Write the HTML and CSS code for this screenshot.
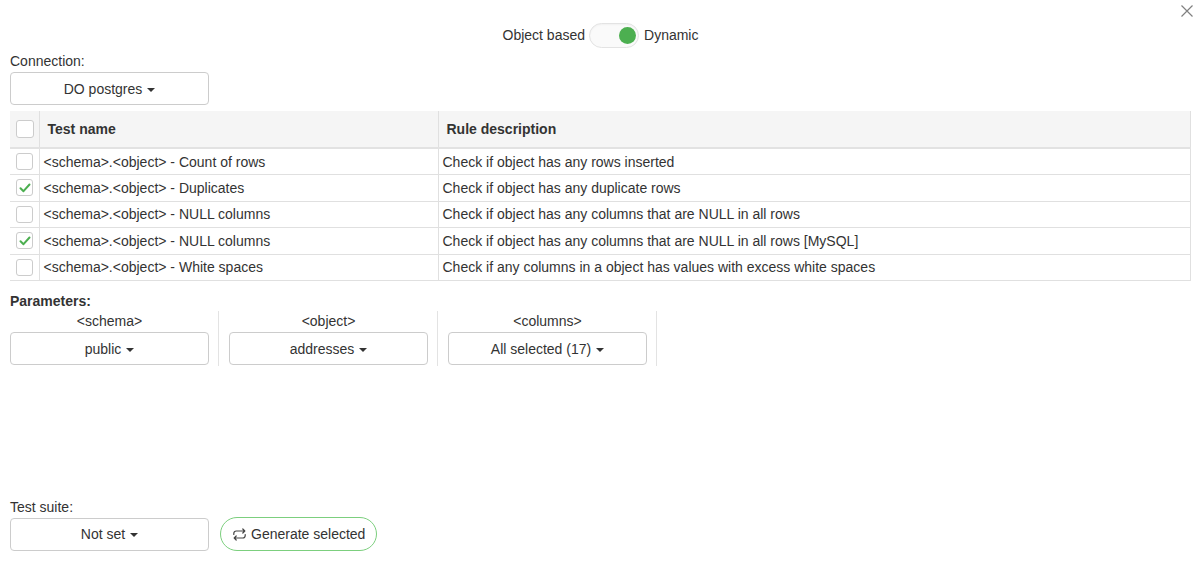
FILE: index.html
```html
<!DOCTYPE html>
<html>
<head>
<meta charset="utf-8">
<link rel="stylesheet" href="styles.css">
</head>
<body>
<div class="dialog">
  <button class="close" aria-label="Close">
    <svg width="12" height="12" viewBox="0 0 12 12"><path d="M0.5 0.5L11.5 11.5M11.5 0.5L0.5 11.5" stroke="#808080" stroke-width="1.2" fill="none"/></svg>
  </button>

  <div class="mode-row">
    <span>Object based</span>
    <span class="switch"><span class="knob"></span></span>
    <span>Dynamic</span>
  </div>

  <div class="label conn-label">Connection:</div>
  <button class="dropdown">DO postgres <span class="caret"></span></button>

  <table class="tests">
    <thead>
      <tr>
        <th class="cb-col"><span class="cb head"></span></th>
        <th class="name-col">Test name</th>
        <th>Rule description</th>
      </tr>
    </thead>
    <tbody>
      <tr>
        <td class="cb-col"><span class="cb"></span></td>
        <td>&lt;schema&gt;.&lt;object&gt; - Count of rows</td>
        <td>Check if object has any rows inserted</td>
      </tr>
      <tr>
        <td class="cb-col"><span class="cb checked"><svg width="12" height="10" viewBox="0 0 12 10"><path d="M1.5 5.2L4.5 8.2L10.5 1.5" stroke="#4caf50" stroke-width="2" fill="none" stroke-linecap="round" stroke-linejoin="round"/></svg></span></td>
        <td>&lt;schema&gt;.&lt;object&gt; - Duplicates</td>
        <td>Check if object has any duplicate rows</td>
      </tr>
      <tr>
        <td class="cb-col"><span class="cb"></span></td>
        <td>&lt;schema&gt;.&lt;object&gt; - NULL columns</td>
        <td>Check if object has any columns that are NULL in all rows</td>
      </tr>
      <tr>
        <td class="cb-col"><span class="cb checked"><svg width="12" height="10" viewBox="0 0 12 10"><path d="M1.5 5.2L4.5 8.2L10.5 1.5" stroke="#4caf50" stroke-width="2" fill="none" stroke-linecap="round" stroke-linejoin="round"/></svg></span></td>
        <td>&lt;schema&gt;.&lt;object&gt; - NULL columns</td>
        <td>Check if object has any columns that are NULL in all rows [MySQL]</td>
      </tr>
      <tr>
        <td class="cb-col"><span class="cb"></span></td>
        <td>&lt;schema&gt;.&lt;object&gt; - White spaces</td>
        <td>Check if any columns in a object has values with excess white spaces</td>
      </tr>
    </tbody>
  </table>

  <div class="label bold params-label">Parameters:</div>
  <div class="params">
    <div class="param">
      <div class="param-name">&lt;schema&gt;</div>
      <button class="dropdown">public <span class="caret"></span></button>
    </div>
    <div class="param">
      <div class="param-name">&lt;object&gt;</div>
      <button class="dropdown">addresses <span class="caret"></span></button>
    </div>
    <div class="param">
      <div class="param-name">&lt;columns&gt;</div>
      <button class="dropdown">All selected (17) <span class="caret"></span></button>
    </div>
  </div>

  <div class="label suite-label">Test suite:</div>
  <div class="suite-row">
    <button class="dropdown">Not set <span class="caret"></span></button>
    <button class="generate">
      <svg width="15" height="13" viewBox="0 0 15 13"><path d="M1.8 6.5V5.5C1.8 4 2.8 3 4.3 3H12.8M10.8 1L12.8 3L10.8 5M13.2 6.5V7.5C13.2 9 12.2 10 10.7 10H2.2M4.2 8L2.2 10L4.2 12" stroke="#444" stroke-width="1.2" fill="none" stroke-linecap="round" stroke-linejoin="round"/></svg>
      <span>Generate selected</span>
    </button>
  </div>
</div>
</body>
</html>
```

FILE: styles.css
```css
* { box-sizing: border-box; }
html, body { margin: 0; padding: 0; background: #fff; }
body {
  font-family: "Liberation Sans", Arial, Helvetica, sans-serif;
  font-size: 14px;
  line-height: 20px;
  color: #333;
}
.dialog {
  position: relative;
  padding: 0 10px 0 10px;
  width: 1201px;
  height: 562px;
}
.close {
  position: absolute;
  top: 4px;
  right: 7px;
  width: 14px;
  height: 14px;
  padding: 1px;
  border: 0;
  background: transparent;
  display: flex;
}
.mode-row {
  display: flex;
  justify-content: center;
  align-items: center;
  padding-top: 23px;
  height: 47px;
  font-size: 14px;
}
.switch {
  width: 50px;
  height: 25px;
  margin: 0 5px 0 4px;
  border: 1px solid #e3e3e3;
  border-radius: 13px;
  background: #fafafa;
  display: flex;
  align-items: center;
  justify-content: flex-end;
  padding-right: 2px;
  box-shadow: inset 0 1px 2px rgba(0,0,0,0.04);
}
.knob {
  width: 17px;
  height: 17px;
  border-radius: 50%;
  background: #4caf50;
}
.label {
  height: 20px;
}
.conn-label { margin-top: 4px; }
.bold { font-weight: bold; }
.dropdown {
  display: flex;
  align-items: center;
  justify-content: center;
  width: 199px;
  height: 33px;
  margin: 1px 0 0 0;
  padding: 0 10px;
  border: 1px solid #ccc;
  border-radius: 4px;
  background: #fff;
  font-family: inherit;
  font-size: 14px;
  color: #333;
}
.caret {
  display: inline-block;
  width: 0;
  height: 0;
  margin-left: 5px;
  margin-top: 2px;
  border-top: 4px solid #333;
  border-left: 4px solid transparent;
  border-right: 4px solid transparent;
}
.tests {
  margin-top: 6px;
  width: 1181px;
  border-collapse: collapse;
  font-size: 14px;
}
.tests th {
  height: 37px;
  background: #f5f5f5;
  text-align: left;
  font-weight: bold;
  padding: 0 8px;
  border-right: 1px solid #e0e0e0;
  border-bottom: 2px solid #e2e2e2;
  vertical-align: middle;
}
.tests td {
  height: 26.5px;
  padding: 0 4px;
  border-right: 1px solid #e0e0e0;
  border-bottom: 1px solid #e0e0e0;
  vertical-align: middle;
  white-space: nowrap;
}
.tests .cb-col {
  width: 29px;
  padding: 0 0 0 6px;
}
.tests .name-col { width: 399px; }
.cb {
  display: flex;
  align-items: center;
  justify-content: center;
  width: 17px;
  height: 17px;
  border: 1px solid #ccc;
  border-radius: 3px;
  background: #fff;
}
.cb.head { width: 18px; height: 18px; }
.params-label { margin-top: 10px; }
.params {
  display: flex;
}
.param {
  width: 209px;
  padding-right: 9px;
  border-right: 1px solid #e3e3e3;
  margin-right: 10px;
  padding-bottom: 1px;
}
.param-name {
  text-align: center;
  height: 20px;
  width: 199px;
}
.param .dropdown { margin-top: 1px; }
.suite-label { margin-top: 131px; }
.suite-row {
  display: flex;
  align-items: center;
  gap: 11px;
}
.suite-row .dropdown { margin-top: 0; }
.generate {
  display: flex;
  align-items: center;
  gap: 4px;
  height: 34px;
  padding: 0 11px 0 11px;
  border: 1px solid #7ccf7e;
  border-radius: 17px;
  background: #fff;
  font-family: inherit;
  font-size: 14px;
  color: #333;
}
```
